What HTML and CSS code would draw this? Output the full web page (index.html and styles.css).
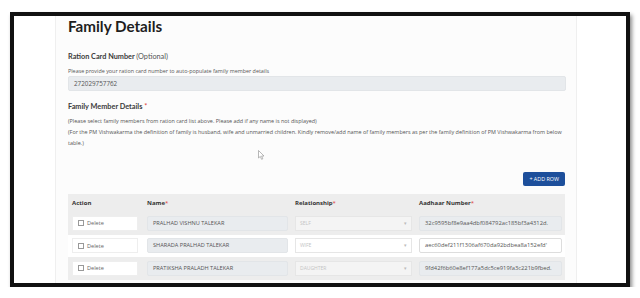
FILE: index.html
```html
<!DOCTYPE html>
<html lang="en">
<head>
<meta charset="UTF-8">
<meta name="viewport" content="width=device-width, initial-scale=1.0">
<title>Family Details</title>
<link rel="stylesheet" href="styles.css">
</head>
<body>
    <!-- Screen capture frame -->
    <div class="frame">
        <div class="card">
            <h1 class="title">Family Details</h1>

            <label class="label label-ration">Ration Card Number <span class="optional">(Optional)</span></label>
            <p class="hint">Please provide your ration card number to auto-populate family member details</p>
            <div class="input input-ration">272029757762</div>

            <label class="label label-members">Family Member Details <span class="req">*</span></label>
            <div class="note">
                <span>(Please select family members from ration card list above. Please add if any name is not displayed)</span>
                <span>(For the PM Vishwakarma the definition of family is husband, wife and unmarried children. Kindly remove/add name of family members as per the family definition of PM Vishwakarma from below</span>
                <span>table.)</span>
            </div>

            <div class="toolbar">
                <button class="add-btn">+ ADD ROW</button>
            </div>

            <table class="members">
                <colgroup>
                    <col class="col-action">
                    <col class="col-name">
                    <col class="col-rel">
                    <col class="col-aadhaar">
                </colgroup>
                <thead>
                    <tr>
                        <th>Action</th>
                        <th>Name<span class="req">*</span></th>
                        <th>Relationship<span class="req">*</span></th>
                        <th>Aadhaar Number<span class="req">*</span></th>
                    </tr>
                </thead>
                <tbody>
                    <tr>
                        <td><div class="del"><span class="box"></span>Delete</div></td>
                        <td><div class="input name">PRALHAD VISHNU TALEKAR</div></td>
                        <td><div class="select disabled">SELF<span class="caret">&#9662;</span></div></td>
                        <td><div class="input aadhaar">32c9595bf8e9aa4dbf084792ac185bf3a4312d.</div></td>
                    </tr>
                    <tr>
                        <td><div class="del"><span class="box"></span>Delete</div></td>
                        <td><div class="input name">SHARADA PRALHAD TALEKAR</div></td>
                        <td><div class="select">WIFE<span class="caret">&#9662;</span></div></td>
                        <td><div class="input aadhaar open">aec60def211f1306af670da92bdbea8a152efd'</div></td>
                    </tr>
                    <tr>
                        <td><div class="del"><span class="box"></span>Delete</div></td>
                        <td><div class="input name">PRATIKSHA PRALADH TALEKAR</div></td>
                        <td><div class="select disabled">DAUGHTER<span class="caret">&#9662;</span></div></td>
                        <td><div class="input aadhaar">9fd42f6b60e8ef177a5dc5ce919fa3c221b9fbed.</div></td>
                    </tr>
                </tbody>
            </table>
        </div>

        <!-- mouse pointer caught in the capture -->
        <svg class="pointer" width="7" height="10" viewBox="0 0 7 10">
            <path d="M0.5 0.5 L0.5 8 L2.3 6.4 L3.6 9.3 L4.8 8.8 L3.6 6 L6 6 Z" fill="#fff" stroke="#999" stroke-width="0.7"/>
        </svg>
    </div>
</body>
</html>
```

FILE: styles.css
```css
body {
    margin: 0;
    background-color: white;
    font-family: "Open Sans", Arial, sans-serif;
    color: #444;
}
.frame {
    position: relative;
    width: 612px;
    height: 267px;
    margin: 12px 0 0 10px;
    border: 4px solid #111;
    background-color: white;
    overflow: hidden;
    box-shadow: 2px 3px 4px rgba(0, 0, 0, 0.45);
}
.card {
    width: 498px;
    height: 100%;
    margin-left: 41px;
    padding: 0 10px 0 12px;
    background-color: #fcfcfc;
    border-left: 1px solid #efefef;
    border-right: 1px solid #efefef;
}
.title {
    margin: 0;
    font-family: Lato, sans-serif;
    font-size: 15.2px;
    font-weight: 700;
    line-height: 20px;
    color: #1e1e1e;
}
.label {
    display: block;
    font-family: Lato, sans-serif;
    font-size: 7.3px;
    font-weight: 700;
    line-height: 10px;
    color: #3a3a3a;
}
.label-ration {
    margin-top: 16px;
}
.label-members {
    margin-top: 11px;
}
.optional {
    font-weight: 400;
    color: #555;
}
.req {
    color: #e0403a;
    font-weight: 400;
}
.hint {
    margin: 5px 0 0;
    font-size: 5.4px;
    line-height: 8px;
    color: #555;
}
.input {
    box-sizing: border-box;
    height: 15px;
    padding: 0 5px;
    background-color: #e9ecef;
    border: 1px solid #e2e5e8;
    border-radius: 2px;
    font-size: 6.3px;
    line-height: 13px;
    color: #555;
    white-space: nowrap;
    overflow: hidden;
}
.input-ration {
    margin-top: 1px;
}
.note {
    margin-top: 4px;
    font-size: 5.45px;
    line-height: 11px;
    color: #555;
}
.note span {
    display: block;
    white-space: nowrap;
}
.toolbar {
    display: flex;
    justify-content: flex-end;
    margin-top: 23px;
    padding-right: 1px;
}
.add-btn {
    height: 14px;
    padding: 0 6px;
    border: none;
    border-radius: 2px;
    background-color: #1d4f9b;
    color: white;
    font-family: "Open Sans", Arial, sans-serif;
    font-size: 5.4px;
    line-height: 14px;
}
.members {
    width: 497px;
    margin-top: 8px;
    border-collapse: collapse;
    table-layout: fixed;
    background-color: #ededed;
}
.col-action { width: 75px; }
.col-name { width: 148px; }
.col-rel { width: 124px; }
.col-aadhaar { width: 150px; }
.members th {
    height: 18px;
    padding: 0 4px;
    text-align: left;
    font-size: 6px;
    font-weight: 700;
    color: #333;
}
.members td {
    height: 22.5px;
    padding: 0 3px 0 4px;
}
.members tbody tr:nth-child(2) {
    background-color: white;
}
.del {
    display: flex;
    align-items: center;
    gap: 3px;
    width: 66px;
    height: 15px;
    box-sizing: border-box;
    padding-left: 5px;
    background-color: white;
    border: 1px solid #eee;
    font-size: 5.6px;
    color: #666;
}
.box {
    width: 4px;
    height: 4px;
    border: 0.6px solid #999;
}
.name {
    width: 141px;
    font-size: 5.6px;
}
.aadhaar {
    width: 143px;
    font-size: 5.8px;
}
.aadhaar.open {
    background-color: white;
    border-color: #ddd;
}
.select {
    position: relative;
    box-sizing: border-box;
    width: 117px;
    height: 15px;
    padding-left: 4px;
    background-color: white;
    border: 1px solid #e6e6e6;
    font-size: 5px;
    line-height: 13px;
    color: #c4c4c4;
}
.select.disabled {
    background-color: #f4f4f4;
}
.caret {
    position: absolute;
    right: 4px;
    top: 0;
    font-size: 5px;
    color: #bbb;
}
.pointer {
    position: absolute;
    left: 244px;
    top: 134px;
}
```
